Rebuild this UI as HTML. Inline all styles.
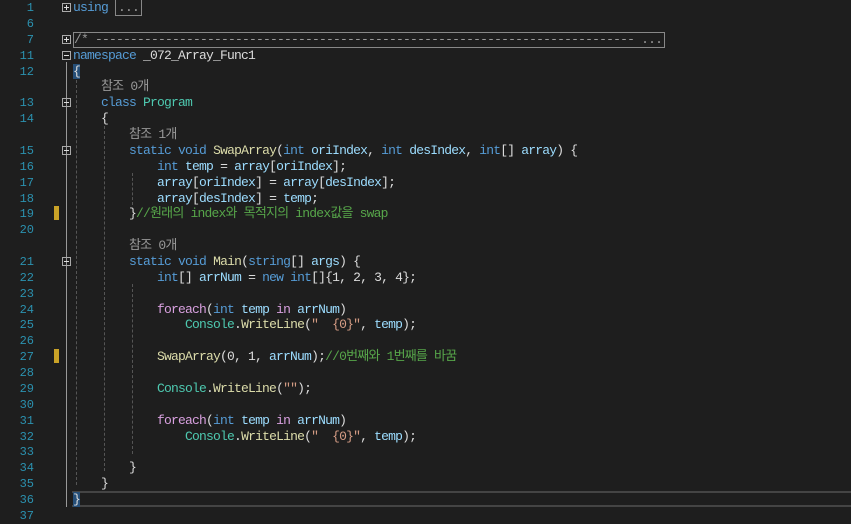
<!DOCTYPE html>
<html><head><meta charset="utf-8"><style>
body{margin:0;background:#1e1e1e;width:851px;height:515px;overflow:hidden;position:relative;font-family:"Liberation Mono","Noto Sans CJK KR",monospace;font-size:13px;letter-spacing:-0.8px;color:#dcdcdc}
.r{position:absolute;left:0;height:16px;line-height:16px;width:851px;white-space:pre}
.n{position:absolute;left:0;width:34px;text-align:right;color:#2b91af;letter-spacing:0;font-size:12px}
.c{position:absolute;left:73px}
.k{color:#569cd6}.t{color:#4ec9b0}.m{color:#dcdcaa}.p{color:#9cdcfe}.f{color:#d8a0df}.g{color:#57a64a}.s{color:#d69d85}.l{color:#999}
.box{position:absolute;width:7px;height:7px;border:1px solid #aaa;left:62px;top:3px}
.box:before{content:"";position:absolute;left:1px;top:3px;width:5px;height:1px;background:#ddd}
.plus:after{content:"";position:absolute;left:3px;top:1px;width:1px;height:5px;background:#ddd}
.vg{position:absolute;border-left:1px dashed #555;width:0}
.mk{position:absolute;left:54px;width:5px;height:14px;background:#c9a227}
.hb{background:#264f78}
</style></head><body>
<div style="position:absolute;left:66px;top:62px;height:445px;border-left:1px solid #999"></div>
<div class="vg" style="left:76px;top:80px;height:405px"></div>
<div class="vg" style="left:104px;top:126px;height:345px"></div>
<div class="vg" style="left:132px;top:173px;height:32px"></div>
<div class="vg" style="left:132px;top:284px;height:170px"></div>
<div style="position:absolute;left:72px;top:491px;width:779px;height:16px;border-top:2px solid #444;border-bottom:2px solid #444;box-sizing:border-box"></div>

<div class="r" style="top:0"><span class="n">1</span><span class="box plus"></span><span class="c"><span class="k">using</span> <span class="l" style="border:1px solid #888;padding:0 2px">...</span></span></div>
<div class="r" style="top:15.9px"><span class="n">6</span></div>
<div class="r" style="top:31.7px"><span class="n">7</span><span class="box plus"></span><span class="c l" style="border:1px solid #888;width:590px;height:14px;line-height:14px;top:0;overflow:hidden">/* ----------------------------------------------------------------------------- ...</span></div>
<div class="r" style="top:47.6px"><span class="n">11</span><span class="box"></span><span class="c"><span class="k">namespace</span> _072_Array_Func1</span></div>
<div class="r" style="top:63.5px"><span class="n">12</span><span class="c"><span class="hb">{</span></span></div>
<div class="r" style="top:79.4px"><span class="c l">    참조 0개</span></div>
<div class="r" style="top:95.2px"><span class="n">13</span><span class="box"></span><span class="c">    <span class="k">class</span> <span class="t">Program</span></span></div>
<div class="r" style="top:111.1px"><span class="n">14</span><span class="c">    {</span></div>
<div class="r" style="top:127px"><span class="c l">        참조 1개</span></div>
<div class="r" style="top:142.8px"><span class="n">15</span><span class="box"></span><span class="c">        <span class="k">static</span> <span class="k">void</span> <span class="m">SwapArray</span>(<span class="k">int</span> <span class="p">oriIndex</span>, <span class="k">int</span> <span class="p">desIndex</span>, <span class="k">int</span>[] <span class="p">array</span>) {</span></div>
<div class="r" style="top:158.7px"><span class="n">16</span><span class="c">            <span class="k">int</span> <span class="p">temp</span> = <span class="p">array</span>[<span class="p">oriIndex</span>];</span></div>
<div class="r" style="top:174.6px"><span class="n">17</span><span class="c">            <span class="p">array</span>[<span class="p">oriIndex</span>] = <span class="p">array</span>[<span class="p">desIndex</span>];</span></div>
<div class="r" style="top:190.5px"><span class="n">18</span><span class="c">            <span class="p">array</span>[<span class="p">desIndex</span>] = <span class="p">temp</span>;</span></div>
<div class="r" style="top:206.3px"><span class="n">19</span><span class="mk"></span><span class="c">        }<span class="g">//원래의 index와 목적지의 index값을 swap</span></span></div>
<div class="r" style="top:222.2px"><span class="n">20</span></div>
<div class="r" style="top:238.1px"><span class="c l">        참조 0개</span></div>
<div class="r" style="top:253.9px"><span class="n">21</span><span class="box"></span><span class="c">        <span class="k">static</span> <span class="k">void</span> <span class="m">Main</span>(<span class="k">string</span>[] <span class="p">args</span>) {</span></div>
<div class="r" style="top:269.8px"><span class="n">22</span><span class="c">            <span class="k">int</span>[] <span class="p">arrNum</span> = <span class="k">new</span> <span class="k">int</span>[]{1, 2, 3, 4};</span></div>
<div class="r" style="top:285.7px"><span class="n">23</span></div>
<div class="r" style="top:301.6px"><span class="n">24</span><span class="c">            <span class="f">foreach</span>(<span class="k">int</span> <span class="p">temp</span> <span class="f">in</span> <span class="p">arrNum</span>)</span></div>
<div class="r" style="top:317.4px"><span class="n">25</span><span class="c">                <span class="t">Console</span>.<span class="m">WriteLine</span>(<span class="s">"  {0}"</span>, <span class="p">temp</span>);</span></div>
<div class="r" style="top:333.3px"><span class="n">26</span></div>
<div class="r" style="top:349.2px"><span class="n">27</span><span class="mk"></span><span class="c">            <span class="m">SwapArray</span>(0, 1, <span class="p">arrNum</span>);<span class="g">//0번째와 1번째를 바꿈</span></span></div>
<div class="r" style="top:365px"><span class="n">28</span></div>
<div class="r" style="top:380.9px"><span class="n">29</span><span class="c">            <span class="t">Console</span>.<span class="m">WriteLine</span>(<span class="s">""</span>);</span></div>
<div class="r" style="top:396.8px"><span class="n">30</span></div>
<div class="r" style="top:412.7px"><span class="n">31</span><span class="c">            <span class="f">foreach</span>(<span class="k">int</span> <span class="p">temp</span> <span class="f">in</span> <span class="p">arrNum</span>)</span></div>
<div class="r" style="top:428.5px"><span class="n">32</span><span class="c">                <span class="t">Console</span>.<span class="m">WriteLine</span>(<span class="s">"  {0}"</span>, <span class="p">temp</span>);</span></div>
<div class="r" style="top:444.4px"><span class="n">33</span></div>
<div class="r" style="top:460.3px"><span class="n">34</span><span class="c">        }</span></div>
<div class="r" style="top:476.1px"><span class="n">35</span><span class="c">    }</span></div>
<div class="r" style="top:492px"><span class="n">36</span><span class="c"><span class="hb">}</span></span></div>
<div class="r" style="top:507.9px"><span class="n">37</span></div>
</body></html>
